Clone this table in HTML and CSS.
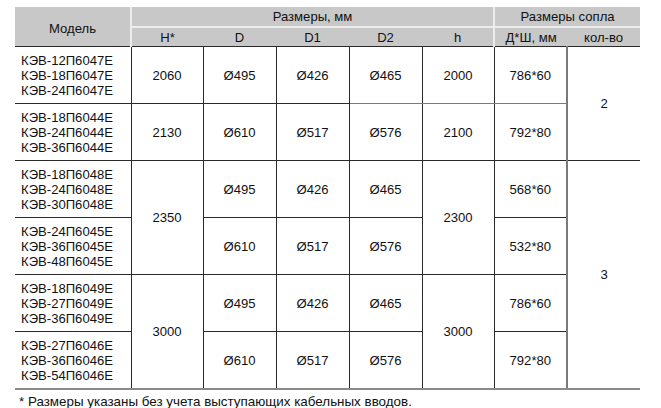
FILE: index.html
```html
<!DOCTYPE html>
<html lang="ru">
<head>
<meta charset="utf-8">
<title>Размеры</title>
<link rel="stylesheet" href="styles.css">
</head>
<body>
<table class="spec">
  <colgroup>
    <col class="c-model">
    <col class="c-72">
    <col class="c-73">
    <col class="c-73">
    <col class="c-73">
    <col class="c-72">
    <col class="c-73">
    <col class="c-73">
  </colgroup>
  <thead>
    <tr class="h1">
      <th rowspan="2" class="hm">Модель</th>
      <th colspan="5" class="hg">Размеры, мм</th>
      <th colspan="2" class="hs">Размеры сопла</th>
    </tr>
    <tr class="h2">
      <th>H*</th>
      <th>D</th>
      <th>D1</th>
      <th>D2</th>
      <th class="hg-end">h</th>
      <th>Д*Ш, мм</th>
      <th>кол-во</th>
    </tr>
  </thead>
  <tbody>
    <tr>
      <td class="model">КЭВ-12П6047Е<br>КЭВ-18П6047Е<br>КЭВ-24П6047Е</td>
      <td>2060</td>
      <td>Ø495</td>
      <td>Ø426</td>
      <td class="soft-b">Ø465</td>
      <td class="soft-b">2000</td>
      <td class="soft-b">786*60</td>
      <td rowspan="2" class="qty">2</td>
    </tr>
    <tr>
      <td class="model">КЭВ-18П6044Е<br>КЭВ-24П6044Е<br>КЭВ-36П6044Е</td>
      <td>2130</td>
      <td>Ø610</td>
      <td>Ø517</td>
      <td>Ø576</td>
      <td>2100</td>
      <td>792*80</td>
    </tr>
    <tr>
      <td class="model">КЭВ-18П6048Е<br>КЭВ-24П6048Е<br>КЭВ-30П6048Е</td>
      <td rowspan="2">2350</td>
      <td>Ø495</td>
      <td>Ø426</td>
      <td>Ø465</td>
      <td rowspan="2">2300</td>
      <td>568*60</td>
      <td rowspan="4" class="qty last">3</td>
    </tr>
    <tr>
      <td class="model">КЭВ-24П6045Е<br>КЭВ-36П6045Е<br>КЭВ-48П6045Е</td>
      <td>Ø610</td>
      <td>Ø517</td>
      <td>Ø576</td>
      <td>532*80</td>
    </tr>
    <tr>
      <td class="model">КЭВ-18П6049Е<br>КЭВ-27П6049Е<br>КЭВ-36П6049Е</td>
      <td rowspan="2" class="last">3000</td>
      <td>Ø495</td>
      <td>Ø426</td>
      <td>Ø465</td>
      <td rowspan="2" class="last">3000</td>
      <td>786*60</td>
    </tr>
    <tr class="end">
      <td class="model">КЭВ-27П6046Е<br>КЭВ-36П6046Е<br>КЭВ-54П6046Е</td>
      <td>Ø610</td>
      <td>Ø517</td>
      <td>Ø576</td>
      <td>792*80</td>
    </tr>
  </tbody>
</table>
<p class="note">* Размеры указаны без учета выступающих кабельных вводов.</p>
</body>
</html>
```

FILE: styles.css
```css
html, body {
  margin: 0;
  padding: 0;
  background: #ffffff;
}

body {
  font-family: "Liberation Sans", Arial, sans-serif;
  font-size: 13.1px;
  color: #111111;
  padding: 7px 0 0 15px;
}

.spec {
  border-collapse: collapse;
  table-layout: fixed;
  width: 625px;
}

.c-model { width: 116px; }
.c-72 { width: 72px; }
.c-73 { width: 73px; }

.spec th {
  background: #c8c8c8;
  font-weight: normal;
  text-align: center;
  padding: 0;
  line-height: 15px;
  border: none;
}

.h1 th {
  height: 19px;
  border-bottom: 2px solid #ececec;
}

.h2 th {
  height: 18px;
  border-bottom: 1px solid #2a2a2a;
}

.spec th.hm {
  border-right: 2px solid #ececec;
  border-bottom: 1px solid #2a2a2a;
  padding-top: 3px;
}

.spec th.hg,
.spec th.hg-end {
  border-right: 2px solid #ececec;
}

.spec td {
  text-align: center;
  vertical-align: middle;
  padding: 0;
  height: 56px;
  line-height: 15px;
  border: 1px solid #2a2a2a;
}

.spec td.model {
  text-align: left;
  padding-left: 6px;
  border-left: none;
}

.spec td.soft-b {
  border-bottom-color: #7a7a7a;
}

.spec td.qty {
  border-left: 2px solid #7a7a7a;
  border-right: none;
}

.spec tr.end td,
.spec td.last {
  border-bottom: 2px solid #8a8a8a;
}

.note {
  margin: 0;
  padding: 4px 0 0 4px;
  font-size: 13.4px;
  line-height: 15px;
}
```
